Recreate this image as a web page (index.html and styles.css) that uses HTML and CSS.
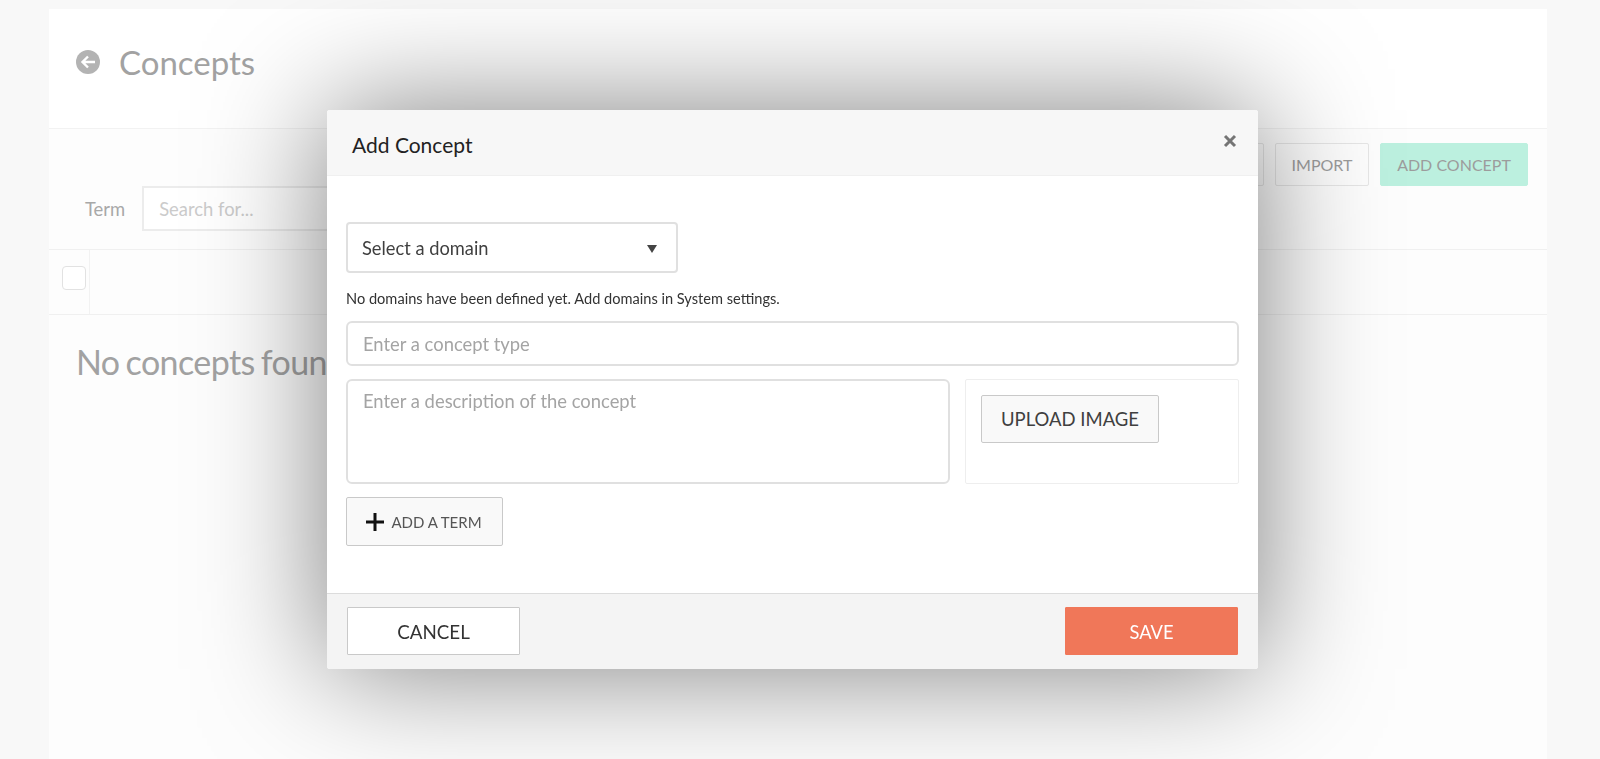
FILE: index.html
```html
<!DOCTYPE html>
<html lang="en">
<head>
<meta charset="utf-8">
<title>Concepts</title>
<link rel="stylesheet" href="styles.css">
</head>
<body>
<main class="page">
  <header class="page-head">
    <svg class="back" viewBox="0 0 24 24" width="24" height="24"><circle cx="12" cy="12" r="12" fill="#b3b3b3"/><path d="M19 12H7M12 6.500 6.500 12l5.500 5.500" fill="none" stroke="#fff" stroke-width="2.400"/></svg>
    <h1 class="title">Concepts</h1>
  </header>
  <section class="toolbar">
    <div class="actions">
      <button class="btn">EXPORT</button>
      <button class="btn">IMPORT</button>
      <button class="btn btn-primary">ADD CONCEPT</button>
    </div>
    <div class="search">
      <label class="search-label">Term</label>
      <input class="search-input" placeholder="Search for...">
    </div>
  </section>
  <div class="table-head">
    <div class="check-cell"><span class="check"></span></div>
  </div>
  <p class="empty">No concepts found</p>
</main>

<div class="dialog">
  <div class="dialog-head">
    <h2 class="dialog-title">Add Concept</h2>
    <svg class="close" viewBox="0 0 14 14" width="14" height="14"><path d="M2 2l10 10M12 2 2 12" stroke="#757575" stroke-width="3"/></svg>
  </div>
  <div class="dialog-body">
    <div class="select">
      <span>Select a domain</span>
      <span class="caret"></span>
    </div>
    <p class="hint">No domains have been defined yet. Add domains in System settings.</p>
    <input class="field" placeholder="Enter a concept type">
    <div class="split">
      <textarea class="field area" placeholder="Enter a description of the concept"></textarea>
      <div class="upload"><button class="upload-btn">UPLOAD IMAGE</button></div>
    </div>
    <button class="add-term">
      <svg viewBox="0 0 20 20" width="20" height="20"><path d="M10 1v18M1 10h18" stroke="#111" stroke-width="3"/></svg>
      ADD A TERM
    </button>
  </div>
  <div class="dialog-foot">
    <button class="foot-btn cancel">CANCEL</button>
    <button class="foot-btn save">SAVE</button>
  </div>
</div>
</body>
</html>
```
FILE: styles.css
```css
* { box-sizing: border-box; }
html, body { margin: 0; height: 759px; overflow: hidden; }
body {
  background: #f8f8f8;
  font-family: "Lato", sans-serif;
  color: #3f3f3f;
}
button, input, textarea { font-family: inherit; margin: 0; }
::placeholder { color: #a4a4a4; opacity: 1; }

.page {
  width: 1498px;
  height: 750px;
  margin: 9px 0 0 49px;
  background: #fdfdfd;
}
.page-head {
  display: flex;
  align-items: center;
  gap: 19px;
  height: 120px;
  padding: 0 0 14px 27px;
  background: #fff;
  border-bottom: 1px solid #f2f2f2;
}
.back { flex: none; }
.title {
  margin: 0;
  font-size: 33px;
  font-weight: 400;
  color: #a2a2a2;
}
.toolbar {
  height: 121px;
  padding: 14px 19px 0 36px;
  border-bottom: 1px solid #f0f0f0;
}
.actions { display: flex; justify-content: flex-end; gap: 11px; height: 43px; }
.btn {
  width: 94px;
  height: 43px;
  padding: 0;
  background: #fdfdfd;
  border: 1px solid #e6e6e6;
  border-radius: 2px;
  font-size: 16px;
  color: #9c9c9c;
}
.btn-primary {
  width: 148px;
  background: #bcf0df;
  border-color: #bcf0df;
}
.search { display: flex; align-items: center; gap: 17px; }
.search-label { font-size: 18.400px; color: #a8a8a8; }
.search-input {
  width: 400px;
  height: 45px;
  padding: 0 15px;
  background: #fff;
  border: 2px solid #ececec;
  font-size: 18.400px;
}
.search-input::placeholder { color: #cbcbcb; }
.table-head {
  height: 65px;
  border-bottom: 1px solid #f0f0f0;
}
.check-cell {
  display: flex;
  align-items: center;
  width: 41px;
  height: 64px;
  padding: 0 0 8px 13px;
  border-right: 1px solid #f2f2f2;
}
.check {
  width: 24px;
  height: 24px;
  background: #fff;
  border: 1px solid #e2e2e2;
  border-radius: 4px;
}
.empty {
  margin: 26px 0 0 27px;
  font-size: 34px;
  font-weight: 400;
  letter-spacing: -0.600px;
  word-spacing: -2px;
  color: #a2a2a2;
}

.dialog {
  position: fixed;
  left: 327px;
  top: 110px;
  width: 931px;
  height: 559px;
  display: flex;
  flex-direction: column;
  background: #fff;
  border-radius: 3px;
  box-shadow: 0 0 125px rgba(0, 0, 0, 0.5);
}
.dialog-head {
  display: flex;
  align-items: center;
  justify-content: space-between;
  height: 66px;
  padding: 3px 21px 0 25px;
  background: #f7f7f7;
  border-bottom: 1px solid #f0f0f0;
  border-radius: 3px 3px 0 0;
}
.dialog-title {
  margin: 0;
  font-size: 21px;
  font-weight: 400;
  color: #222;
}
.close { margin-top: -6px; }
.dialog-body {
  flex: 1;
  padding: 46px 19px 0;
  display: flex;
  flex-direction: column;
  align-items: flex-start;
}
.select {
  display: flex;
  align-items: center;
  justify-content: space-between;
  width: 332px;
  height: 51px;
  padding: 0 19px 0 14px;
  border: 2px solid #e0e0e0;
  border-radius: 4px;
  font-size: 18.300px;
}
.caret {
  width: 0;
  height: 0;
  margin-top: 3px;
  border-left: 5.500px solid transparent;
  border-right: 5.500px solid transparent;
  border-top: 8px solid #444;
}
.hint {
  margin: 17px 0 14px;
  font-size: 14.600px;
  line-height: 17px;
  color: #333;
}
.field {
  display: block;
  width: 100%;
  height: 45px;
  padding: 0 15px;
  border: 2px solid #e0e0e0;
  border-radius: 6px;
  font-size: 18.400px;
  color: #3f3f3f;
  background: #fff;
  outline: none;
}
.split {
  display: flex;
  gap: 15px;
  width: 100%;
  height: 105px;
  margin-top: 13px;
}
.area {
  flex: none;
  width: 604px;
  height: 105px;
  padding: 9px 15px;
  resize: none;
}
.upload {
  flex: 1;
  padding: 15px;
  border: 1px solid #eeeeee;
  border-radius: 2px;
}
.upload-btn {
  display: block;
  width: 178px;
  height: 48px;
  padding: 0;
  background: #f9f9f9;
  border: 1px solid #c9c9c9;
  border-radius: 2px;
  font-size: 18.500px;
  color: #404040;
}
.add-term {
  display: flex;
  align-items: center;
  justify-content: center;
  gap: 6px;
  width: 157px;
  height: 49px;
  margin-top: 13px;
  padding: 0 2px 0 0;
  background: #f9f9f9;
  border: 1px solid #c9c9c9;
  border-radius: 2px;
  font-size: 15px;
  color: #555;
}
.dialog-foot {
  display: flex;
  align-items: center;
  justify-content: space-between;
  height: 76px;
  padding: 0 20px 2px;
  background: #f4f4f4;
  border-top: 1px solid #dcdcdc;
  border-radius: 0 0 3px 3px;
}
.foot-btn {
  width: 173px;
  height: 48px;
  padding: 2px 0 0;
  border-radius: 1px;
  font-size: 18.800px;
}
.cancel {
  background: #fff;
  border: 1px solid #c9c9c9;
  color: #333;
}
.save {
  background: #f07759;
  border: 1px solid #f07759;
  color: #fff;
  font-size: 18.300px;
}
```
